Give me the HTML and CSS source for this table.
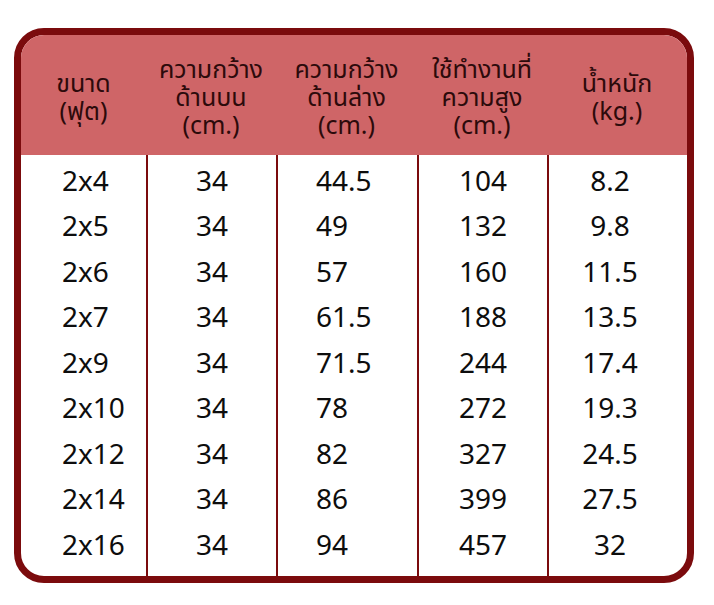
FILE: index.html
```html
<!DOCTYPE html>
<html lang="th">
<head>
<meta charset="utf-8">
<link rel="stylesheet" href="styles.css">
</head>
<body>
<div class="card">
  <div class="head">
    <div class="hcell">ขนาด<br>(ฟุต)</div>
    <div class="hcell">ความกว้าง<br>ด้านบน<br>(cm.)</div>
    <div class="hcell">ความกว้าง<br>ด้านล่าง<br>(cm.)</div>
    <div class="hcell">ใช้ทำงานที่<br>ความสูง<br>(cm.)</div>
    <div class="hcell">น้ำหนัก<br>(kg.)</div>
  </div>
  <div class="rows">
    <div class="col col-left col-size">
      <div class="cell">2x4</div><div class="cell">2x5</div><div class="cell">2x6</div><div class="cell">2x7</div><div class="cell">2x9</div><div class="cell">2x10</div><div class="cell">2x12</div><div class="cell">2x14</div><div class="cell">2x16</div>
    </div>
    <div class="col">
      <div class="cell">34</div><div class="cell">34</div><div class="cell">34</div><div class="cell">34</div><div class="cell">34</div><div class="cell">34</div><div class="cell">34</div><div class="cell">34</div><div class="cell">34</div>
    </div>
    <div class="col col-left col-bottom">
      <div class="cell">44.5</div><div class="cell">49</div><div class="cell">57</div><div class="cell">61.5</div><div class="cell">71.5</div><div class="cell">78</div><div class="cell">82</div><div class="cell">86</div><div class="cell">94</div>
    </div>
    <div class="col">
      <div class="cell">104</div><div class="cell">132</div><div class="cell">160</div><div class="cell">188</div><div class="cell">244</div><div class="cell">272</div><div class="cell">327</div><div class="cell">399</div><div class="cell">457</div>
    </div>
    <div class="col col-weight">
      <div class="cell">8.2</div><div class="cell">9.8</div><div class="cell">11.5</div><div class="cell">13.5</div><div class="cell">17.4</div><div class="cell">19.3</div><div class="cell">24.5</div><div class="cell">27.5</div><div class="cell">32</div>
    </div>
  </div>
</div>
</body>
</html>
```
FILE: styles.css
```css
html, body {
  margin: 0;
  padding: 0;
  background: #ffffff;
}
body {
  width: 714px;
  height: 605px;
  font-family: "Noto Sans", "Noto Sans Thai", "Liberation Sans", sans-serif;
}
.card {
  margin: 28px 0 0 14px;
  width: 666px;
  height: 541px;
  border: 7px solid #7b0b0d;
  border-radius: 30px;
  overflow: hidden;
  background: #ffffff;
  display: flex;
  flex-direction: column;
}
.head {
  height: 120px;
  background: #cf6567;
  display: grid;
  grid-template-columns: 125px 130px 141px 130px 140px;
  align-items: center;
}
.hcell {
  text-align: center;
  color: #2c0a0b;
  font-size: 25px;
  line-height: 28px;
  padding-top: 2px;
}
.rows {
  flex: 1;
  display: grid;
  grid-template-columns: 125px 130px 141px 130px 140px;
}
.col {
  padding-top: 2px;
  display: flex;
  flex-direction: column;
}
.col + .col {
  border-left: 2px solid #7b0b0d;
}
.cell {
  height: 45.5px;
  display: flex;
  align-items: center;
  justify-content: center;
  font-size: 28px;
  color: #0d0d0d;
}
.col-left .cell {
  justify-content: flex-start;
}
.col-size .cell {
  padding-left: 41px;
}
.col-bottom .cell {
  padding-left: 38px;
}
.col-weight .cell {
  padding-right: 16px;
}
```
